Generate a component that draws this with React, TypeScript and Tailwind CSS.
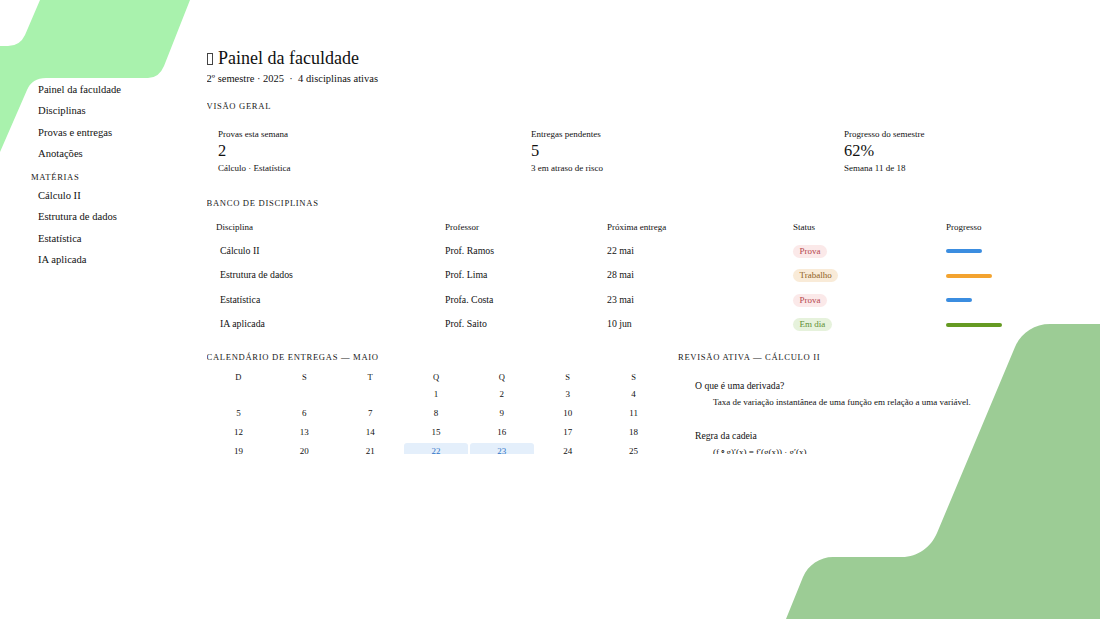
import React from 'react';

const navMain = ['Painel da faculdade', 'Disciplinas', 'Provas e entregas', 'Anotações'];
const navSubjects = ['Cálculo II', 'Estrutura de dados', 'Estatística', 'IA aplicada'];

const stats = [
  { label: 'Provas esta semana', value: '2', note: 'Cálculo · Estatística' },
  { label: 'Entregas pendentes', value: '5', note: '3 em atraso de risco' },
  { label: 'Progresso do semestre', value: '62%', note: 'Semana 11 de 18' },
];

const rows = [
  { name: 'Cálculo II', prof: 'Prof. Ramos', due: '22 mai', status: 'Prova', badge: 'bg-[#fbe9e9] text-[#b5474d]', bar: 'w-[36px] bg-[#3b8de0]' },
  { name: 'Estrutura de dados', prof: 'Prof. Lima', due: '28 mai', status: 'Trabalho', badge: 'bg-[#f9ebd8] text-[#8f5f1e]', bar: 'w-[46px] bg-[#f3a32f]' },
  { name: 'Estatística', prof: 'Profa. Costa', due: '23 mai', status: 'Prova', badge: 'bg-[#fbe9e9] text-[#b5474d]', bar: 'w-[26px] bg-[#3b8de0]' },
  { name: 'IA aplicada', prof: 'Prof. Saito', due: '10 jun', status: 'Em dia', badge: 'bg-[#e6f2dc] text-[#5f8f35]', bar: 'w-[56px] bg-[#659a22]' },
];

const weekDays = ['D', 'S', 'T', 'Q', 'Q', 'S', 'S'];
const days = ['', '', '', '1', '2', '3', '4', '5', '6', '7', '8', '9', '10', '11', '12', '13', '14', '15', '16', '17', '18', '19', '20', '21', '22', '23', '24', '25'];
const tableCols = 'grid grid-cols-[229px_162px_186px_153px_1fr] items-center';

const SectionTitle = ({ children }: { children: React.ReactNode }) => (
  <h2 className="text-[8.6px] leading-[12px] tracking-[0.08em] text-[#1a1a1a]">{children}</h2>
);

export default function App() {
  return (
    <div className="relative flex h-[619px] w-[1100px] overflow-hidden bg-white text-[#111] [font-family:'Liberation_Serif',serif]">
      {/* Background shapes */}
      <svg className="absolute inset-0" width="1100" height="619" viewBox="0 0 1100 619">
        <path d="M40 0 L25 35 Q20 46 8 46 L0 46 L0 152 L27 90 Q32 78 46 78 L148 78 Q159 78 164 66 L190 0 Z" fill="#a9f2ad" />
        <path d="M786 619 L803 577 C808 565 820 557 833 557 L902 557 C918 557 931 547 937 533 L1015 347 C1021 333 1034 324 1050 324 L1100 324 L1100 619 Z" fill="#9ccc95" />
      </svg>

      <aside className="relative flex w-[206.5px] shrink-0 flex-col pl-[31px] pt-[79px]">
        <nav className="flex flex-col pl-[7px]">
          {navMain.map((item) => (
            <a key={item} className="h-[21.4px] text-[10.6px] leading-[21.4px]">{item}</a>
          ))}
        </nav>
        <div className="mt-[5.5px] text-[8.6px] leading-[14px] tracking-[0.08em] text-[#1a1a1a]">MATÉRIAS</div>
        <nav className="mt-[1px] flex flex-col pl-[7px]">
          {navSubjects.map((item) => (
            <a key={item} className="h-[21.4px] text-[10.6px] leading-[21.4px]">{item}</a>
          ))}
        </nav>
      </aside>

      <main className="relative flex h-[454px] w-[893.5px] flex-col overflow-hidden pt-[47px]">
        <h1 className="flex items-center text-[18px] leading-[23px]">
          {/* missing-glyph box in front of the title */}
          <span className="mr-[5.5px] h-[12px] w-[6px] border border-[#444]" />
          Painel da faculdade
        </h1>
        <p className="mt-[0.5px] text-[10.5px] leading-[16px]">2º semestre · 2025 &nbsp;·&nbsp; 4 disciplinas ativas</p>

        <div className="mt-[13px]"><SectionTitle>VISÃO GERAL</SectionTitle></div>
        <div className="mt-[16.5px] grid grid-cols-[313px_313px_1fr] pl-[11.5px]">
          {stats.map((s) => (
            <div key={s.label} className="flex flex-col">
              <span className="text-[9px] leading-[12px]">{s.label}</span>
              <span className="text-[16.4px] leading-[22px]">{s.value}</span>
              <span className="text-[9px] leading-[12px]">{s.note}</span>
            </div>
          ))}
        </div>

        <div className="mt-[23px]"><SectionTitle>BANCO DE DISCIPLINAS</SectionTitle></div>
        <div className={`${tableCols} mt-[12px] h-[16px] pl-[9.5px] text-[9px]`}>
          <span>Disciplina</span>
          <span>Professor</span>
          <span>Próxima entrega</span>
          <span>Status</span>
          <span>Progresso</span>
        </div>
        <div className="mt-[4.2px] flex flex-col pl-[9.5px]">
          {rows.map((r) => (
            <div key={r.name} className={`${tableCols} h-[24.6px] text-[9.8px]`}>
              <span className="pl-[4px]">{r.name}</span>
              <span>{r.prof}</span>
              <span>{r.due}</span>
              <span>
                <span className={`inline-block h-[13px] rounded-full px-[6.5px] text-[9px] leading-[13px] ${r.badge}`}>{r.status}</span>
              </span>
              <span className={`h-[4px] rounded-full ${r.bar}`} />
            </div>
          ))}
        </div>

        <div className="mt-[14.4px] flex gap-[12.5px]">
          <section className="w-[459px] shrink-0">
            <SectionTitle>CALENDÁRIO DE ENTREGAS — MAIO</SectionTitle>
            <div className="mt-[8px] grid grid-cols-7 gap-x-[2px] gap-y-[3px]">
              {weekDays.map((d, i) => (
                <span key={i} className="h-[12px] text-center text-[8.5px] leading-[12px]">{d}</span>
              ))}
              {days.map((d, i) => (
                <span
                  key={i}
                  className={`h-[16px] rounded-t-[3px] text-center text-[9px] leading-[16px] ${d === '22' || d === '23' ? 'bg-[#e4effb] text-[#2f74c8]' : ''}`}
                >
                  {d}
                </span>
              ))}
            </div>
          </section>
          <section className="flex-1">
            <SectionTitle>REVISÃO ATIVA — CÁLCULO II</SectionTitle>
            <div className="mt-[15.5px] pl-[17px]">
              <p className="text-[9.7px] leading-[14px]">O que é uma derivada?</p>
              <p className="mt-[2px] pl-[18px] text-[9px] leading-[14px]">Taxa de variação instantânea de uma função em relação a uma variável.</p>
              <p className="mt-[20px] text-[9.7px] leading-[14px]">Regra da cadeia</p>
              <p className="mt-[2px] pl-[18px] text-[9px] leading-[14px]">(f{'\u200A'}∘{'\u200A'}g)′(x) = f′(g(x)) · g′(x)</p>
            </div>
          </section>
        </div>
      </main>
    </div>
  );
}
